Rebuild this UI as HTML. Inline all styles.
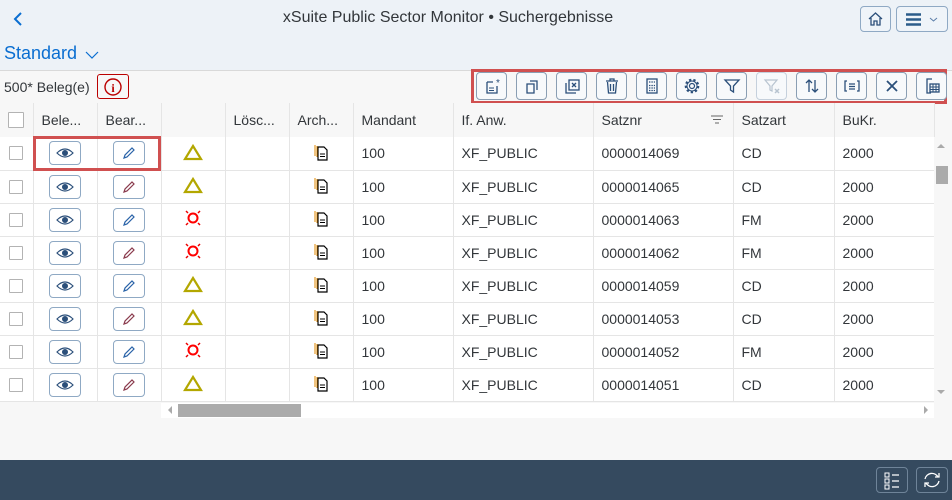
<!DOCTYPE html>
<html><head><meta charset="utf-8"><style>
*{box-sizing:border-box;margin:0;padding:0}
body{width:952px;height:500px;overflow:hidden;background:#f7f7f7;font-family:"Liberation Sans",Arial,sans-serif;color:#32363a;position:relative}
.abs{position:absolute}
.hdr{left:0;top:0;width:952px;height:70px;background:#edf2f7}
.title{left:248px;top:9px;width:400px;text-align:center;font-size:16px;color:#32363a}
.hbtn{border:1px solid #8fa9c4;border-radius:4px;background:#eff4f9;height:26px;top:6px}
.tb{top:72px;height:28px;width:31px;border:1px solid #8a9eb3;border-radius:4px;background:#f7f9fb;display:flex;align-items:center;justify-content:center}
table{position:absolute;left:0;top:103px;border-collapse:collapse;table-layout:fixed;font-size:14px}
td,th{border-right:1px solid #e5e5e5;border-bottom:1px solid #e5e5e5;height:33px;padding:0 8px;white-space:nowrap;overflow:hidden;font-weight:normal;text-align:left}
th{background:#f7f7f7;height:34px}
td{background:#fff}
.cb{width:14px;height:14px;border:1px solid #b3b3b3;background:#fff;margin:auto;border-radius:1px}
.ib{width:32px;height:24px;border:1px solid #8fa9c4;border-radius:4px;margin:auto;display:flex;align-items:center;justify-content:center;background:#fff}
.c{text-align:center;padding:0}
</style></head><body>
<div class="abs hdr"></div>
<svg class="abs" style="left:12px;top:11px" width="12" height="16"><path d="M9 2 L3 8 L9 14" stroke="#0a6ed1" stroke-width="2" fill="none"/></svg>
<div class="abs title">xSuite Public Sector Monitor • Suchergebnisse</div>
<div class="abs hbtn" style="left:860px;width:31px"><svg width="29" height="24"><path d="M8 12 L14.5 6 L21 12 M10 11 V18 H13 V14 H16 V18 H19 V11" stroke="#2b4f7a" stroke-width="1.3" fill="none"/></svg></div>
<div class="abs hbtn" style="left:896px;width:52px"><svg width="50" height="24"><path d="M9 7.5H24M9 12.5H24M9 17.5H24" stroke="#2b5c8a" stroke-width="2.4"/><path d="M33 11 L36.5 14 L40 11" stroke="#5a7da8" stroke-width="1" fill="none"/></svg></div>
<div class="abs" style="left:4px;top:43px;font-size:18px;color:#0a6ed1">Standard</div>
<svg class="abs" style="left:85px;top:50px" width="14" height="10"><path d="M1 2 L7 8 L13 2" stroke="#0a6ed1" stroke-width="1.2" fill="none"/></svg>
<div class="abs" style="left:0;top:70px;width:952px;height:1px;background:#d9d9d9"></div>
<div class="abs" style="left:4px;top:79px;font-size:14px">500* Beleg(e)</div>
<div class="abs" style="left:97px;top:74px;width:32px;height:25px;border:1px solid #bb0000;border-radius:3px;display:flex;align-items:center;justify-content:center"><svg width="20" height="20"><circle cx="10" cy="10" r="8" stroke="#bb0000" stroke-width="1.4" fill="none"/><text x="10" y="15" font-size="12" font-family="Liberation Serif" fill="#bb0000" text-anchor="middle" font-weight="bold">i</text></svg></div>
<div class="abs" style="left:471px;top:69px;width:476px;height:35px;border:3px solid #d05050"></div>
<div class="abs tb" style="left:476px"><svg width="20" height="20"><path d="M5 6H11 M5 6V17H15V10" stroke="#2b4f7a" stroke-width="1.3" fill="none"/><path d="M7 12H12M7 14.5H12" stroke="#2b4f7a"/><text x="16" y="10" font-size="10" fill="#2b4f7a" text-anchor="middle">*</text></svg></div>
<div class="abs tb" style="left:516px"><svg width="20" height="20"><path d="M8 5H15V14M5 8H12V17H5Z" stroke="#2b4f7a" stroke-width="1.3" fill="none"/></svg></div>
<div class="abs tb" style="left:556px"><svg width="20" height="20"><path d="M4 7V17H14" stroke="#2b4f7a" stroke-width="1.3" fill="none"/><rect x="7" y="4" width="10" height="10" stroke="#2b4f7a" stroke-width="1.3" fill="none"/><path d="M10 7L14 11M14 7L10 11" stroke="#2b4f7a" stroke-width="1.3"/></svg></div>
<div class="abs tb" style="left:596px"><svg width="20" height="20"><path d="M4 5H16M8 5V3H12V5M5.5 6L6.5 17H13.5L14.5 6M8.5 8V15M11.5 8V15" stroke="#2b4f7a" stroke-width="1.3" fill="none"/></svg></div>
<div class="abs tb" style="left:636px"><svg width="20" height="20"><rect x="5" y="3" width="10" height="14" stroke="#2b4f7a" stroke-width="1.3" fill="none"/><path d="M7 6H13M7 9.5H13M7 12H13M7 14.5H13" stroke="#2b4f7a" stroke-width="1.3" stroke-dasharray="1.4 1"/></svg></div>
<div class="abs tb" style="left:676px"><svg width="20" height="20"><circle cx="10" cy="10" r="2.5" stroke="#2b4f7a" stroke-width="1.2" fill="none"/><circle cx="10" cy="10" r="6" stroke="#2b4f7a" stroke-width="2.6" fill="none" stroke-dasharray="2.2 2"/><circle cx="10" cy="10" r="5" stroke="#2b4f7a" stroke-width="1" fill="none"/></svg></div>
<div class="abs tb" style="left:716px"><svg width="20" height="20"><path d="M3 4H17L11.5 10V16L8.5 14V10Z" stroke="#2b4f7a" stroke-width="1.3" fill="none"/></svg></div>
<div class="abs tb" style="left:756px;border-color:#c5d0dc"><svg width="20" height="20"><path d="M3 4H15L10 10V15L8 14V10Z" stroke="#b8c4d0" stroke-width="1.2" fill="none"/><path d="M13 13L17 17M17 13L13 17" stroke="#b8c4d0" stroke-width="1.5"/></svg></div>
<div class="abs tb" style="left:796px"><svg width="20" height="20"><path d="M7 16V4M4 7L7 4L10 7M13 4V16M10 13L13 16L16 13" stroke="#2b4f7a" stroke-width="1.3" fill="none"/></svg></div>
<div class="abs tb" style="left:836px"><svg width="20" height="20"><path d="M5 5H3V15H5M15 5H17V15H15M7 8H13M7 10.5H13M7 13H13" stroke="#2b4f7a" stroke-width="1.3" fill="none"/></svg></div>
<div class="abs tb" style="left:876px"><svg width="20" height="20"><path d="M5 5L15 15M15 5L5 15" stroke="#2b4f7a" stroke-width="1.8"/></svg></div>
<div class="abs tb" style="left:916px"><svg width="20" height="20"><path d="M10 3H5V17H9" stroke="#2b4f7a" stroke-width="1.3" fill="none"/><rect x="8" y="8" width="9" height="8" stroke="#2b4f7a" stroke-width="1.3" fill="none"/><path d="M8 11H17M8 13.5H17M11 8V16M14 8V16" stroke="#2b4f7a"/></svg></div>

<table>
<colgroup><col style="width:33px"><col style="width:64px"><col style="width:64px"><col style="width:64px"><col style="width:64px"><col style="width:64px"><col style="width:100px"><col style="width:140px"><col style="width:140px"><col style="width:101px"><col style="width:100px"></colgroup>
<tr><th class="c"><div class="cb" style="width:16px;height:16px"></div></th><th>Bele...</th><th>Bear...</th><th style="border-left:1px solid #999"></th><th>Lösc...</th><th>Arch...</th><th>Mandant</th><th>If. Anw.</th><th style="position:relative">Satznr<svg style="position:absolute;right:10px;top:12px" width="12" height="10"><path d="M0 1H12M2 4.5H10M4 8H8" stroke="#666"/></svg></th><th>Satzart</th><th>BuKr.</th></tr>
</table>
<div id="rows"></div>
<script>
var d=[["0000014069","CD",0,1],["0000014065","CD",0,0],["0000014063","FM",1,1],["0000014062","FM",1,0],["0000014059","CD",0,1],["0000014053","CD",0,0],["0000014052","FM",1,1],["0000014051","CD",0,0]];
var tri='<svg width="20" height="18"><path d="M10 3L18 16H2Z" stroke="#b3a700" stroke-width="2.2" fill="none"/></svg>';
var err='<svg width="20" height="20"><circle cx="10" cy="10" r="4.5" stroke="#f00" stroke-width="2" fill="none"/><path d="M3 3L5 5M17 3L15 5M3 17L5 15M17 17L15 15" stroke="#e00" stroke-width="1.5"/></svg>';
var eye='<svg width="20" height="14"><path d="M2 7Q10 -1 18 7Q10 15 2 7Z" stroke="#2b4f7a" stroke-width="1.2" fill="none"/><circle cx="10" cy="7" r="3" fill="#2b4f7a"/></svg>';
function pen(c){return '<svg width="16" height="16"><path d="M3 13L4 10L11 3L13 5L6 12Z M3 13L5.5 12" stroke="'+c+'" stroke-width="1.2" fill="none"/></svg>';}
var arch='<svg width="16" height="18"><path d="M2 2V13M4 3V14" stroke="#e08a00" stroke-width="1"/><path d="M5 4H11L14 7V17H5Z" stroke="#000" stroke-width="1.2" fill="#fff"/><path d="M7 11H12M7 13.5H12" stroke="#000"/></svg>';
var h='<table style="top:137px"><colgroup><col style="width:33px"><col style="width:64px"><col style="width:64px"><col style="width:64px"><col style="width:64px"><col style="width:64px"><col style="width:100px"><col style="width:140px"><col style="width:140px"><col style="width:101px"><col style="width:100px"></colgroup>';
d.forEach(function(r){h+='<tr><td class="c"><div class="cb"></div></td><td class="c"><div class="ib">'+eye+'</div></td><td class="c"><div class="ib">'+pen(r[3]?'#2a63a8':'#8a3b4d')+'</div></td><td class="c" style="border-left:1px solid #999">'+(r[2]?err:tri)+'</td><td></td><td class="c">'+arch+'</td><td>100</td><td>XF_PUBLIC</td><td>'+r[0]+'</td><td>'+r[1]+'</td><td>2000</td></tr>';});
h+='</table>';document.getElementById('rows').innerHTML=h;
</script>
<div class="abs" style="left:33px;top:136px;width:128px;height:35px;border:3px solid #d05050"></div>
<div class="abs" style="left:934px;top:137px;width:16px;height:266px;background:#f7f7f7"></div>
<svg class="abs" style="left:936px;top:142px" width="10" height="8"><path d="M1 6L5 2L9 6Z" fill="#aaa"/></svg>
<div class="abs" style="left:936px;top:166px;width:12px;height:18px;background:#ababab"></div>
<svg class="abs" style="left:936px;top:388px" width="10" height="8"><path d="M1 2L5 6L9 2Z" fill="#aaa"/></svg>
<div class="abs" style="left:161px;top:403px;width:773px;height:15px;background:#fff"></div>
<svg class="abs" style="left:166px;top:405px" width="8" height="10"><path d="M6 1L2 5L6 9Z" fill="#aaa"/></svg>
<svg class="abs" style="left:922px;top:405px" width="8" height="10"><path d="M2 1L6 5L2 9Z" fill="#aaa"/></svg>
<div class="abs" style="left:178px;top:404px;width:123px;height:13px;background:#ababab"></div>
<div class="abs" style="left:0;top:460px;width:952px;height:40px;background:#354a5f"></div>
<div class="abs" style="left:876px;top:467px;width:32px;height:26px;border:1px solid #6f8499;border-radius:4px;background:#354a5f"><svg width="30" height="24"><path d="M8 5H12V9H8ZM8 11H12V15H8ZM8 17H12V21H8Z" stroke="#fff" stroke-width="1" fill="none"/><path d="M15 7H22M15 13H22M15 19H22" stroke="#fff" stroke-width="1.2"/></svg></div>
<div class="abs" style="left:916px;top:467px;width:32px;height:26px;border:1px solid #6f8499;border-radius:4px;background:#354a5f"><svg width="30" height="24"><path d="M8 11A7 7 0 0 1 21 9M22 13A7 7 0 0 1 9 15" stroke="#fff" stroke-width="1.3" fill="none"/><path d="M22 5V9H18M8 19V15H12" stroke="#fff" stroke-width="1.3" fill="none"/></svg></div>
</body></html>
